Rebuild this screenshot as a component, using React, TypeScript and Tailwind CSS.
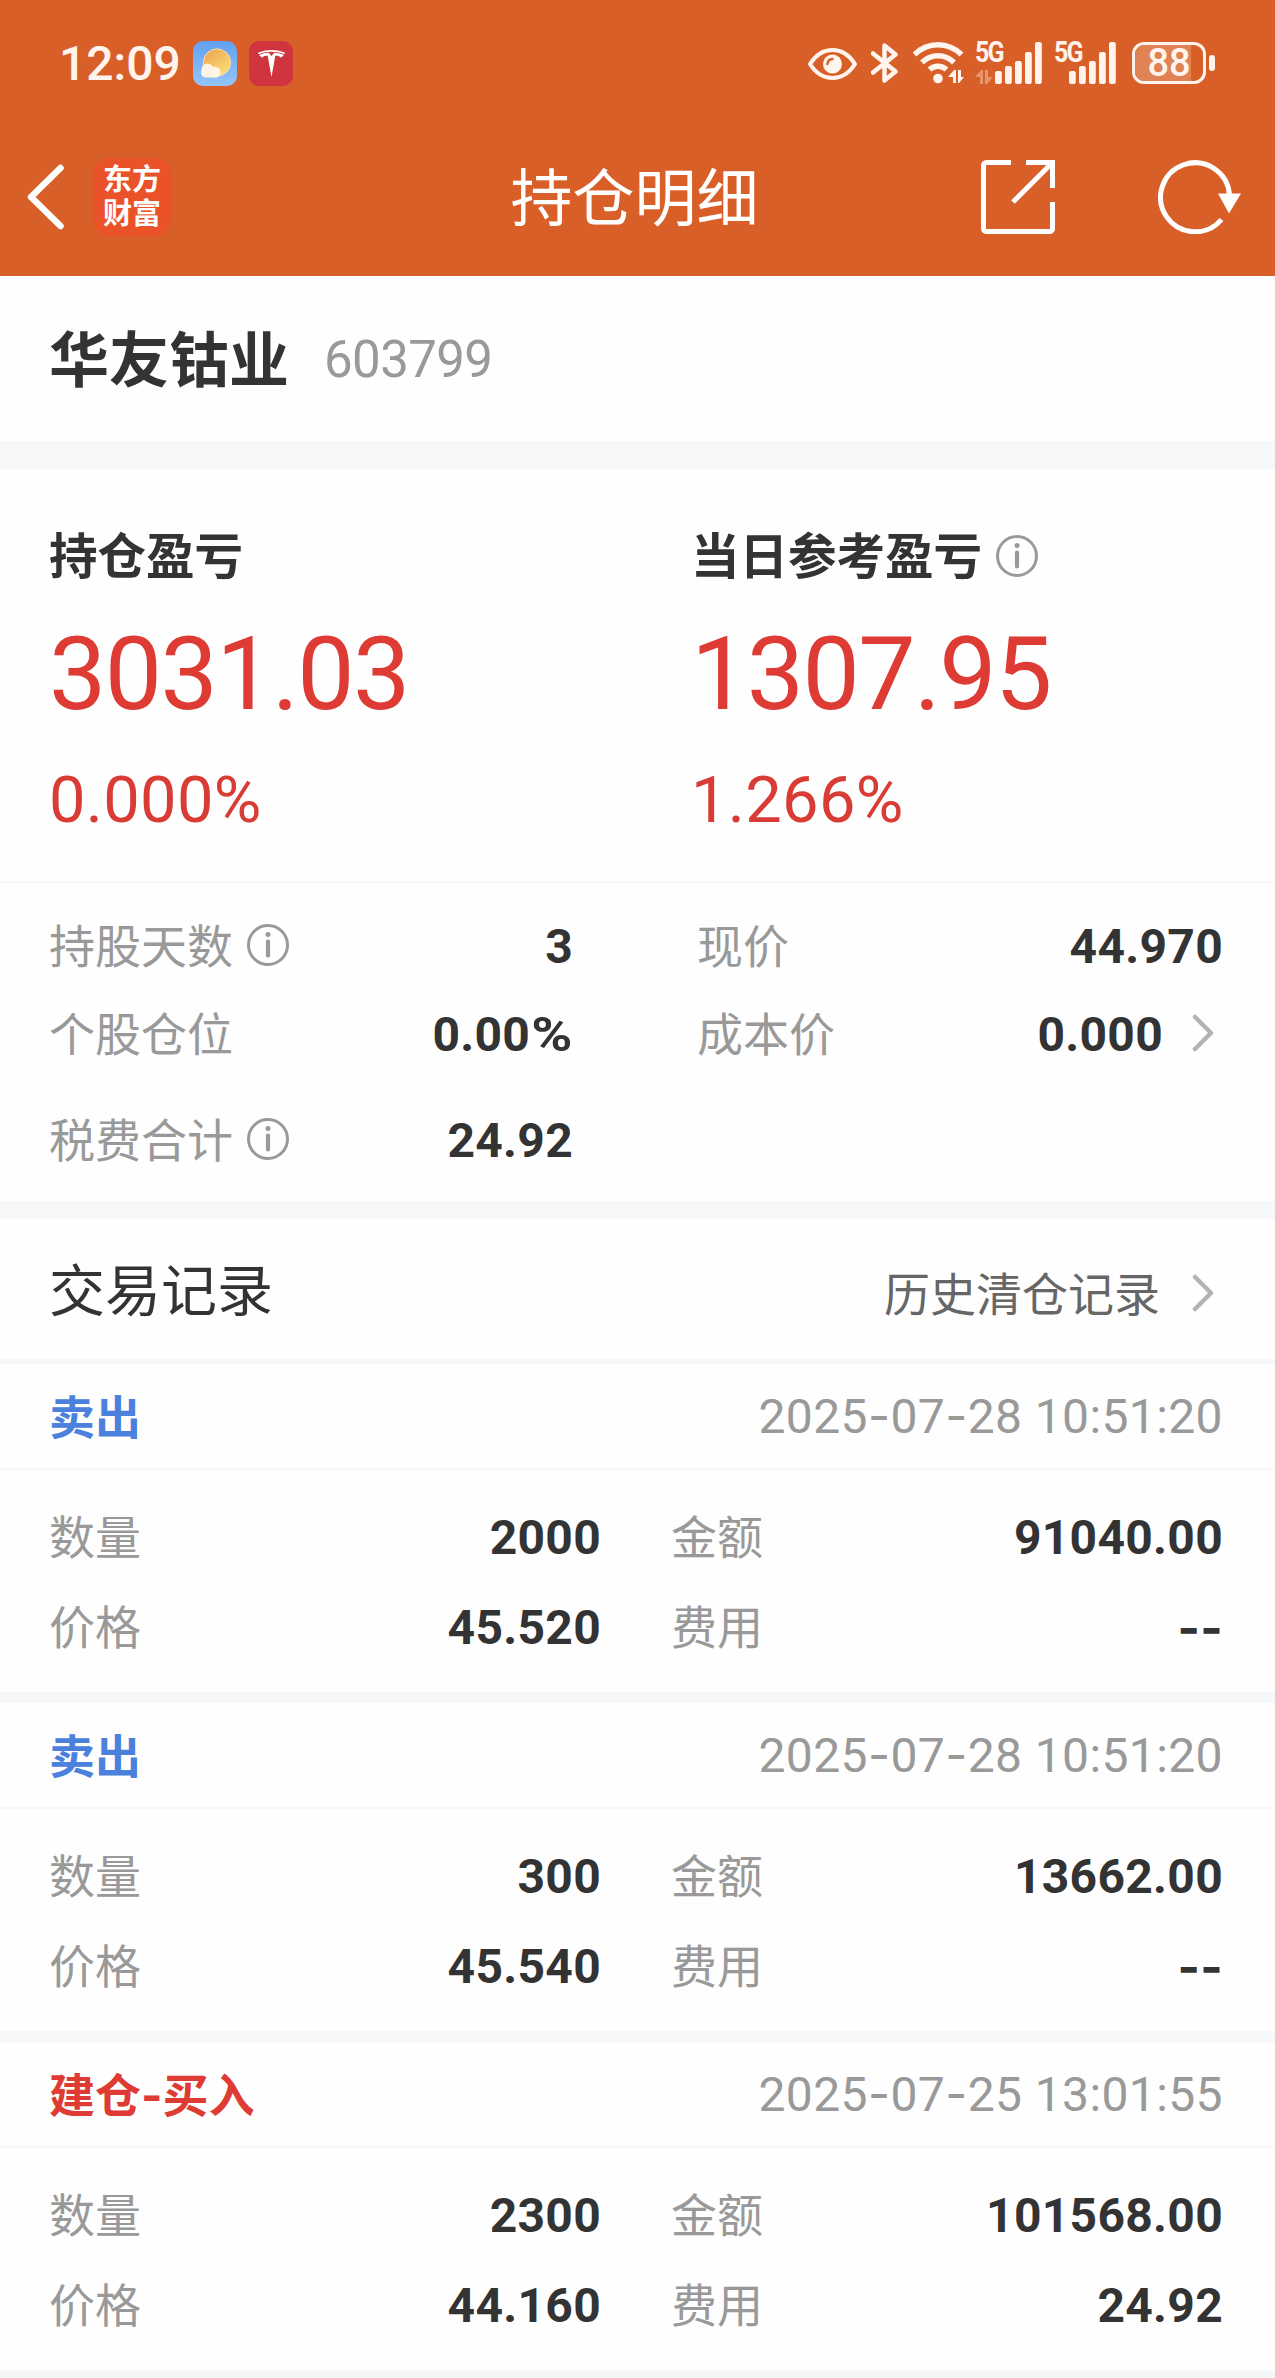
import type { ReactNode } from 'react'
import { SiTesla } from 'react-icons/si'

interface Trade {
  id: number
  side: 'buy' | 'sell'
  title: string
  time: string
  quantity: string
  amount: string
  price: string
  fee: string
}

const trades: Trade[] = [
  {
    id: 1,
    side: 'sell',
    title: '卖出',
    time: '2025-07-28 10:51:20',
    quantity: '2000',
    amount: '91040.00',
    price: '45.520',
    fee: '--',
  },
  {
    id: 2,
    side: 'sell',
    title: '卖出',
    time: '2025-07-28 10:51:20',
    quantity: '300',
    amount: '13662.00',
    price: '45.540',
    fee: '--',
  },
  {
    id: 3,
    side: 'buy',
    title: '建仓-买入',
    time: '2025-07-25 13:01:55',
    quantity: '2300',
    amount: '101568.00',
    price: '44.160',
    fee: '24.92',
  },
]

// 连字符用 Inter 显示，比 Roboto 的更宽；百分号横向拉宽
function Dashed({ text }: { text: string }) {
  return (
    <>
      {text.split(/([-%])/).map((part, i) => {
        if (part === '-') {
          return (
            <span key={i} className="font-[Inter,sans-serif]">
              -
            </span>
          )
        }
        if (part === '%') {
          return (
            <span key={i} className="inline-block ml-[7px] scale-x-[1.16] origin-right">
              %
            </span>
          )
        }
        return part
      })}
    </>
  )
}

function InfoIcon() {
  return (
    <svg className="w-[42px] h-[42px] flex-none mb-1" viewBox="0 0 42 42" fill="none">
      <circle cx="21" cy="21" r="19.5" stroke="#999" strokeWidth="3" />
      <circle cx="21" cy="10.5" r="2.5" fill="#999" />
      <path d="M21 17.5v14" stroke="#999" strokeWidth="4.2" strokeLinecap="round" />
    </svg>
  )
}

function ChevronRight() {
  return (
    <svg className="w-[22px] h-[38px] flex-none" viewBox="0 0 22 38" fill="none">
      <path
        d="M3 3l16 16L3 35"
        stroke="#b3b3b3"
        strokeWidth="4.5"
        strokeLinecap="round"
        strokeLinejoin="round"
      />
    </svg>
  )
}

function WeatherIcon() {
  return (
    <svg className="w-11 h-[45px]" viewBox="0 0 44 45">
      <defs>
        <linearGradient id="sky" x1="0" y1="0" x2="0" y2="1">
          <stop offset="0" stopColor="#62a0f0" />
          <stop offset="1" stopColor="#94c5fb" />
        </linearGradient>
        <linearGradient id="sun" x1="0" y1="0" x2="0.7" y2="1">
          <stop offset="0" stopColor="#eda04f" />
          <stop offset="1" stopColor="#fbdc74" />
        </linearGradient>
      </defs>
      <rect width="44" height="45" rx="10" fill="url(#sky)" />
      <circle cx="24" cy="21.5" r="13.6" fill="url(#sun)" stroke="#fbe3a6" strokeWidth="1" />
      <circle cx="14.5" cy="28.5" r="6" fill="#fdf3e0" />
      <circle cx="22" cy="31" r="5.5" fill="#fdf3e0" />
      <rect x="8" y="27" width="19.5" height="9.5" rx="4.75" fill="#fdf5e6" />
    </svg>
  )
}

function Bars() {
  return (
    <svg className="w-[47px] h-[42px] flex-none" viewBox="0 0 47 42" fill="currentColor">
      <rect x="0" y="29" width="6.8" height="13" rx="2" />
      <rect x="10" y="24" width="6.8" height="18" rx="2" />
      <rect x="20" y="19" width="6.8" height="23" rx="2" />
      <rect x="30" y="10" width="6.8" height="32" rx="2" />
      <rect x="40" y="0" width="6.8" height="42" rx="2" />
    </svg>
  )
}

function Signal({ data }: { data?: boolean }) {
  return (
    <div className={`relative flex justify-end ${data ? 'w-[67px]' : 'w-[62px]'}`}>
      <span className="absolute left-0 -top-0.5 text-[29px] leading-[24px] font-bold tracking-[-2px] scale-x-[0.86] origin-left">
        5G
      </span>
      {data && (
        <svg className="absolute left-0 bottom-0 w-[18px] h-[14px]" viewBox="0 0 18 14" fill="#e8956c">
          <path d="M0 7l6-7h2v14H5V7zM10 0h3v7h5l-6 7h-2z" />
        </svg>
      )}
      <Bars />
    </div>
  )
}

function StatusBar() {
  return (
    <div className="flex items-center justify-between h-[118px] pt-2 pl-[59px] pr-[60px] text-[#fff5ee]">
      <div className="flex items-center">
        <span className="w-[134px] pt-0.5 text-[48px] leading-none font-medium">12:09</span>
        <WeatherIcon />
        <div className="ml-3 w-11 h-[45px] rounded-[10px] bg-[#d0343f] flex items-center justify-center">
          <SiTesla className="w-[27px] h-[27px] text-white" />
        </div>
      </div>

      <div className="flex items-center">
        <svg className="w-[49px] h-8 mt-0.5" viewBox="0 0 49 32" fill="none">
          <path
            d="M2 16C8 6.5 16 2 24.5 2S41 6.5 47 16C41 25.5 33 30 24.5 30S8 25.5 2 16z"
            stroke="currentColor"
            strokeWidth="4"
            strokeLinejoin="round"
          />
          <circle cx="24.5" cy="16" r="9.5" fill="currentColor" />
          <path d="M19.5 16a5.5 5.5 0 0 1 5-5" stroke="#d85f28" strokeWidth="2.5" strokeLinecap="round" />
        </svg>
        <svg className="ml-[14px] w-[27px] h-10" viewBox="0 0 27 40" fill="none">
          <path
            d="M2 10.5L24.5 28.5 13.5 37.5V2.5l11 9L2 29.5"
            stroke="currentColor"
            strokeWidth="4.5"
            strokeLinejoin="round"
            strokeLinecap="round"
          />
        </svg>
        <svg className="ml-[15px] w-[51px] h-[42px]" viewBox="0 0 51 42" fill="none">
          <g stroke="currentColor" strokeWidth="5.5">
            <path d="M1.5 12.5C15 -.5 35 -.5 48.5 12.5" />
            <path d="M9 20.5C18 11.5 32 11.5 41 20.5" />
            <path d="M16.5 27.5C21.5 23 28.5 23 33.5 27.5" />
          </g>
          <circle cx="25" cy="36.5" r="4.8" fill="currentColor" />
          <path d="M35 35l6-7h2v13h-3v-6zM45 28h3v7h3l-5 6h-1z" fill="currentColor" />
        </svg>
        <div className="ml-[11px]">
          <Signal data />
        </div>
        <div className="ml-3 mr-4">
          <Signal />
        </div>
        <div className="relative w-[74px] h-[42px] rounded-[12px] border-[3px] border-current flex items-center justify-center overflow-hidden">
          <div className="absolute inset-y-0 left-0 w-[56px] bg-[#e08253]" />
          <span className="relative text-[38px] leading-none font-medium">88</span>
        </div>
        <div className="ml-[3px] w-[6px] h-4 rounded-[3px] bg-current" />
      </div>
    </div>
  )
}

function NavBar() {
  return (
    <div className="grid grid-cols-[1fr_auto_1fr] items-center h-[158px] pl-[26px] pr-[32px]">
      <div className="flex items-center">
        <svg className="w-10 h-[66px] -ml-px" viewBox="0 0 40 66" fill="none">
          <path d="M35.5 4L6 33l29.5 29" stroke="#fff" strokeWidth="6.5" strokeLinejoin="round" strokeLinecap="round" />
        </svg>
        <div className="ml-7 w-[78px] h-[78px] rounded-[16px] bg-[#ea532a] flex flex-col items-center justify-center text-white text-[29px] leading-[34px] font-bold">
          <span>东方</span>
          <span>财富</span>
        </div>
      </div>

      <h1 className="pt-[5px] text-[62px] leading-none text-white">持仓明细</h1>

      <div className="flex items-center justify-end -mr-0.5 pr-0.5">
        <svg className="w-[74px] h-[74px]" viewBox="0 0 74 74" fill="none" stroke="#fff" strokeWidth="5">
          <path d="M30 2.5H5.5a3 3 0 0 0-3 3v63a3 3 0 0 0 3 3h63a3 3 0 0 0 3-3V42" />
          <path d="M45 2.5h26.5V28M70.5 3.5L32 42" />
        </svg>
        <svg className="ml-[103px] mr-0.5 w-[83px] h-[74px]" viewBox="0 0 83 74">
          <path d="M63.5 59.5A34.5 34.5 0 1 1 71.5 35" fill="none" stroke="#fff" strokeWidth="5" />
          <path d="M60 33.5h23L71 53.5z" fill="#fff" />
        </svg>
      </div>
    </div>
  )
}

interface FieldProps {
  label: string
  value: string
  info?: boolean
  arrow?: boolean
}

function Field({ label, value, info, arrow }: FieldProps) {
  return (
    <div className="flex items-center justify-between h-full">
      <div className="flex items-center gap-[14px]">
        <span className="text-[46px] leading-[88px] text-[#999]">{label}</span>
        {info && <InfoIcon />}
      </div>
      <div className="flex items-center">
        <span className="text-[48px] leading-[88px] font-bold tracking-[0.3px] text-[#333]">
          <Dashed text={value} />
        </span>
        {arrow && (
          <span className="flex ml-[29px] mr-[9px] mb-1">
            <ChevronRight />
          </span>
        )}
      </div>
    </div>
  )
}

function Summary({ title, value, percent, info }: { title: string; value: string; percent: string; info?: ReactNode }) {
  return (
    <div>
      <div className="flex items-center gap-[14px] h-[72px]">
        <h2 className="text-[48.5px] leading-[72px] font-bold text-[#333]">{title}</h2>
        {info}
      </div>
      <p className="text-[102px] leading-[161px] tracking-[-1.6px] text-[#dd3b33]">{value}</p>
      <p className="text-[65px] leading-[90px] tracking-[0.3px] text-[#d83c35]">{percent}</p>
    </div>
  )
}

function TradeCard({ trade }: { trade: Trade }) {
  return (
    <section className="border-b-[11px] border-[#f6f7f9]">
      <div className="flex items-center justify-between h-[106px] pl-[49px] pr-[52px] border-b-2 border-[#f6f7f8]">
        <span
          className={`pt-[3px] text-[46px] leading-none font-bold ${
            trade.side === 'sell' ? 'text-[#4b81dc]' : 'text-[#dd3b33]'
          }`}
        >
          <Dashed text={trade.title} />
        </span>
        <span className="pt-px text-[48px] leading-none tracking-[0.4px] text-[#999]">
          <Dashed text={trade.time} />
        </span>
      </div>
      <div className="grid grid-cols-[552px_552px] auto-rows-[90px] gap-x-[70px] pl-[49px] pt-[23px] pb-[19px]">
        <Field label="数量" value={trade.quantity} />
        <Field label="金额" value={trade.amount} />
        <Field label="价格" value={trade.price} />
        <Field label="费用" value={trade.fee} />
      </div>
    </section>
  )
}

export default function App() {
  return (
    <div className="w-[1275px] h-[2378px] overflow-hidden bg-[#fefefe] font-[Roboto,'Noto_Sans_CJK_SC',sans-serif]">
      <header className="bg-[#d85f28]">
        <StatusBar />
        <NavBar />
      </header>

      {/* 股票名称 */}
      <div className="flex items-center h-[165px] pl-[49px] pt-0.5">
        <span className="pt-[5px] text-[60px] leading-none font-bold text-[#333]">华友钴业</span>
        <span className="ml-[35px] text-[51px] leading-none tracking-[-0.6px] text-[#999]">603799</span>
      </div>
      <div className="h-7 bg-[#f6f7f9]" />

      {/* 盈亏 */}
      <section className="grid grid-cols-[642px_1fr] h-[414px] pl-[49px] pt-[53px] border-b-2 border-[#f6f7f8]">
        <Summary title="持仓盈亏" value="3031.03" percent="0.000%" />
        <Summary title="当日参考盈亏" value="1307.95" percent="1.266%" info={<InfoIcon />} />
      </section>

      {/* 持仓信息 */}
      <section className="grid grid-cols-[524px_526px] grid-rows-[88px_88px_124px] gap-x-[124px] h-[318px] pl-[49px] pt-5">
        <Field label="持股天数" value="3" info />
        <Field label="现价" value="44.970" />
        <Field label="个股仓位" value="0.00%" />
        <Field label="成本价" value="0.000" arrow />
        <Field label="税费合计" value="24.92" info />
      </section>
      <div className="h-[18px] bg-[#f6f7f9]" />

      {/* 交易记录 */}
      <div className="flex items-center justify-between h-[145px] pl-[49px] pr-[61px] border-b-[5px] border-[#f6f7f8]">
        <h2 className="pt-[5px] text-[56px] leading-none text-[#333]">交易记录</h2>
        <div className="flex items-center pt-2">
          <span className="pt-1 text-[46px] leading-none text-[#666]">历史清仓记录</span>
          <span className="flex ml-8">
            <ChevronRight />
          </span>
        </div>
      </div>

      {trades.map(trade => (
        <TradeCard key={trade.id} trade={trade} />
      ))}
    </div>
  )
}
